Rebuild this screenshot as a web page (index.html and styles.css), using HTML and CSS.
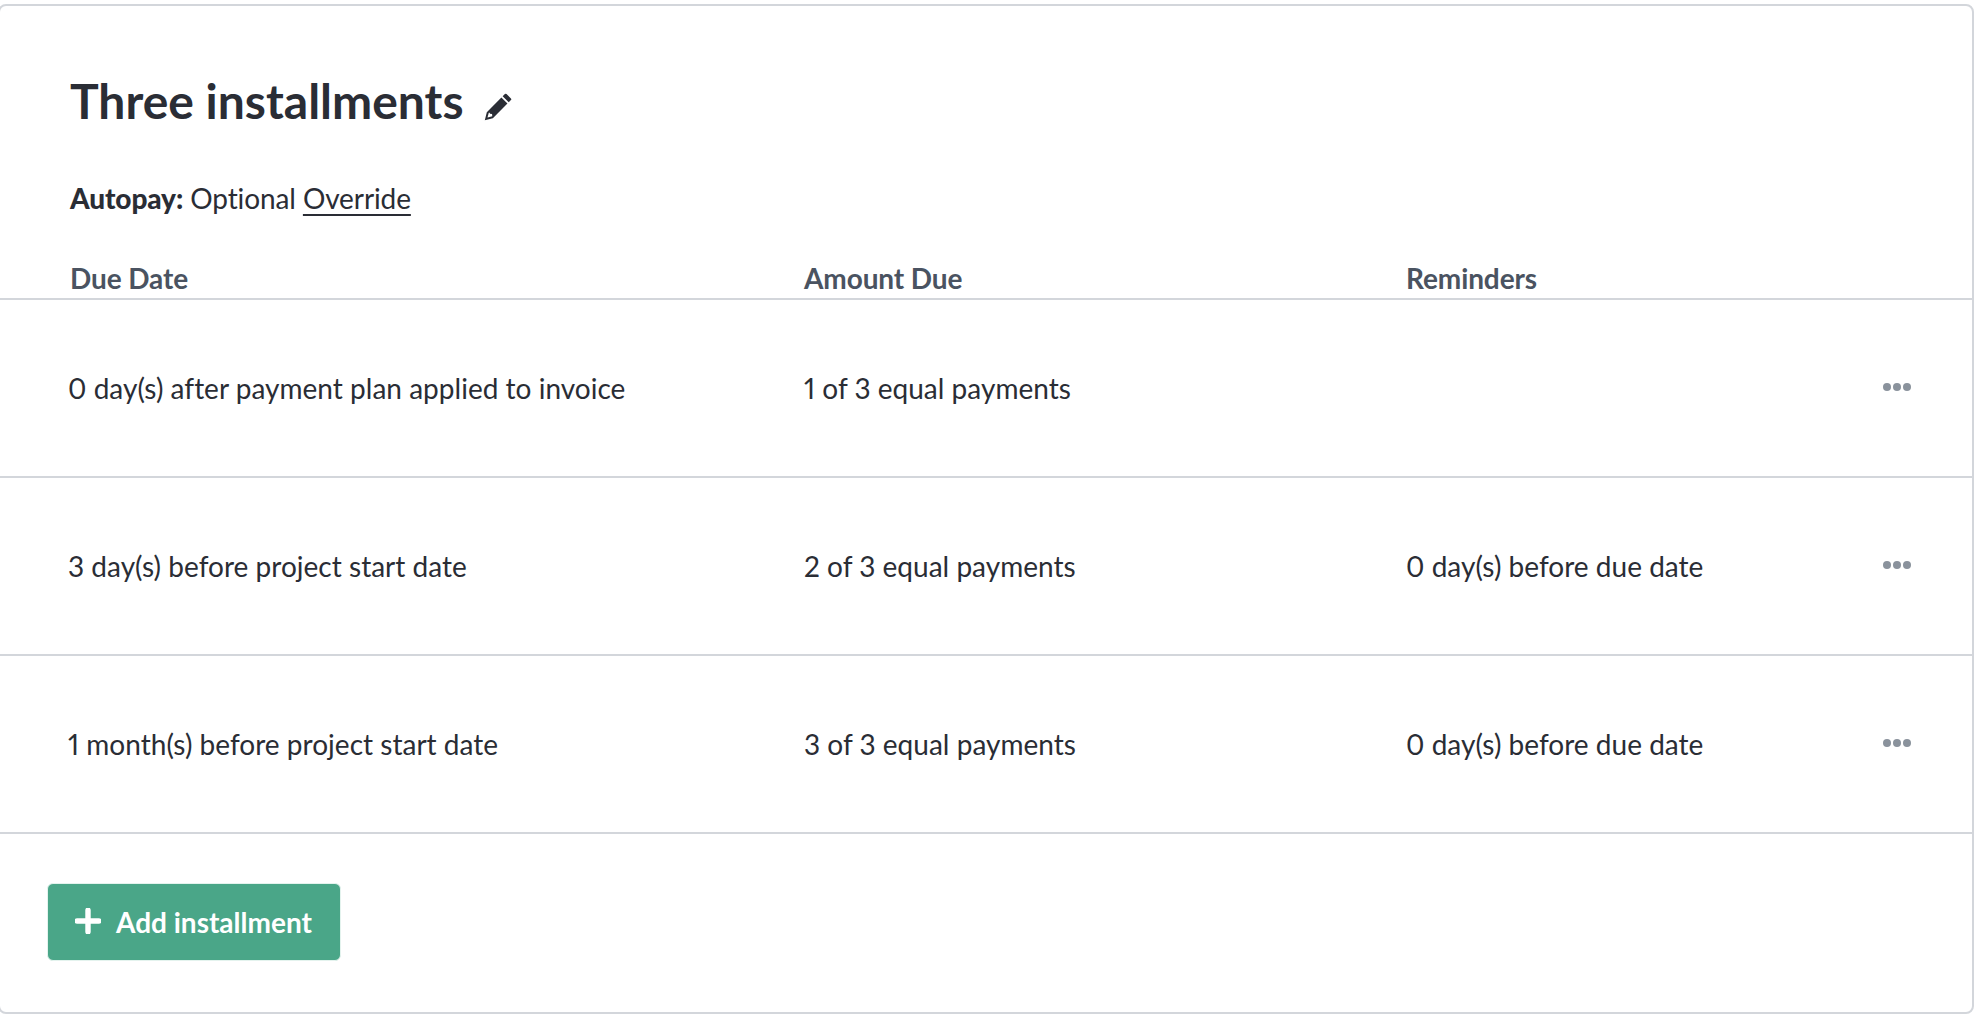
FILE: index.html
```html
<!DOCTYPE html>
<html lang="en">
<head>
<meta charset="utf-8">
<title>Three installments</title>
<link rel="stylesheet" href="styles.css">
</head>
<body>
<main class="card">
  <header class="head">
    <h1 class="title">Three installments
      <svg class="pencil" viewBox="0 0 24 24" width="28" height="28" aria-hidden="true"><path fill-rule="evenodd" d="M19.3 0.9 23.1 4.7a1 1 0 0 1 0 1.4L21.2 8 16 2.8l1.9-1.9a1 1 0 0 1 1.4 0ZM14.9 3.9 20.1 9.1 7.6 21.6 0.7 23.3 2.4 16.4ZM4.1 16.9 3 20.9l0.1 0.1 4-1.1-0.2-1.9-1.8-0.2-0.2-0.9Z"/></svg>
    </h1>
    <p class="autopay"><strong>Autopay:</strong> Optional <a class="override" href="#">Override</a></p>
  </header>
  <div class="row-grid heads">
    <div>Due Date</div><div>Amount Due</div><div>Reminders</div>
  </div>
  <div class="row-grid row">
    <div class="due">0 day(s) after payment plan applied to invoice</div><div>1 of 3 equal payments</div><div></div>
    <svg class="dots" viewBox="0 0 28 10" width="28" height="10" aria-hidden="true"><circle cx="4" cy="5" r="4"/><circle cx="14" cy="5" r="4"/><circle cx="24" cy="5" r="4"/></svg>
  </div>
  <div class="row-grid row">
    <div class="due">3 day(s) before project start date</div><div>2 of 3 equal payments</div><div>0 day(s) before due date</div>
    <svg class="dots" viewBox="0 0 28 10" width="28" height="10" aria-hidden="true"><circle cx="4" cy="5" r="4"/><circle cx="14" cy="5" r="4"/><circle cx="24" cy="5" r="4"/></svg>
  </div>
  <div class="row-grid row">
    <div class="due">1 month(s) before project start date</div><div>3 of 3 equal payments</div><div>0 day(s) before due date</div>
    <svg class="dots" viewBox="0 0 28 10" width="28" height="10" aria-hidden="true"><circle cx="4" cy="5" r="4"/><circle cx="14" cy="5" r="4"/><circle cx="24" cy="5" r="4"/></svg>
  </div>
  <div class="foot">
    <button class="add" type="button">
      <svg class="plus" viewBox="0 0 24 24" width="26" height="26" aria-hidden="true"><path d="M12 2v20M2 12h20"/></svg>
      <span class="add-label">Add installment</span>
    </button>
  </div>
</main>
</body>
</html>
```
FILE: styles.css
```css
* { box-sizing: border-box; }
html, body { margin: 0; background: #fff; }
body {
  padding-top: 4px;
  height: 1014px;
  overflow: hidden;
  font-family: "Lato", "Liberation Sans", sans-serif;
  font-variant-ligatures: none;
  font-variant-numeric: proportional-nums;
  color: #2a2d35;
}
.card {
  width: 1976px;
  height: 1010px;
  margin-left: -2px;
  border: 2px solid #d3d6db;
  border-radius: 8px;
  background: #fff;
}
.head { padding: 67px 0 0 70px; }
.title {
  margin: 0;
  display: flex;
  align-items: center;
  gap: 20px;
  font-size: 48px;
  line-height: 56px;
  font-weight: 700;
}
.pencil { fill: #2a2d35; margin-top: 12px; }
.autopay {
  margin: 53px 0 0;
  font-size: 28px;
  line-height: 32px;
  letter-spacing: -0.1px;
}
.autopay strong { font-weight: 900; }
.override {
  color: inherit;
  text-decoration: underline;
  text-decoration-thickness: 2px;
  text-underline-offset: 5px;
}
.row-grid {
  display: grid;
  grid-template-columns: 734px 602px 1fr 28px;
  padding: 0 61px 0 70px;
  border-bottom: 2px solid #d3d6db;
}
.heads {
  margin-top: 46px;
  height: 40px;
  align-items: end;
  padding-bottom: 4px;
  font-size: 28px;
  line-height: 32px;
  font-weight: 700;
  color: #4a5361;
  letter-spacing: -0.1px;
}
.row {
  height: 178px;
  align-items: center;
  font-size: 28px;
  line-height: 32px;
  letter-spacing: 0.02px;
}
.due { margin-left: -2px; }
.dots { fill: #8a929c; margin-top: -3px; }
.foot { padding: 49px 0 0 47px; }
.add {
  display: inline-flex;
  align-items: center;
  gap: 15px;
  width: 294px;
  height: 78px;
  padding: 0 0 0 27px;
  border: 1px solid #e4f3ee;
  border-radius: 6px;
  background: #4aa688;
  color: #fff;
  font-family: inherit;
  font-size: 28px;
  font-weight: 700;
}
.add-label { margin-top: -1px; }
.plus { fill: none; stroke: #fff; stroke-width: 5; stroke-linecap: round; margin-top: -3px; }
```
